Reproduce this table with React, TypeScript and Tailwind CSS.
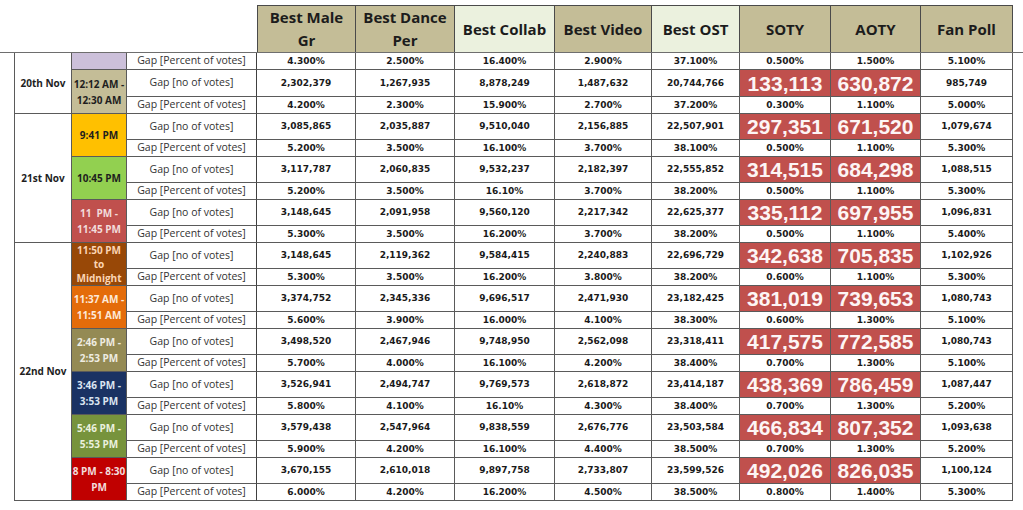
import React from 'react'

const COLS =
  'grid-cols-[58px_55px_130px_99px_99px_100px_97px_88px_91px_90px_92px]'

interface Block {
  date?: { label: string; span: string }
  time: string[]
  timeClass: string
  num: string[]
  pct: string[]
}

const headers = [
  { lines: ['Best Male', 'Gr'], bg: 'bg-[#c4bd97]' },
  { lines: ['Best Dance', 'Per'], bg: 'bg-[#c4bd97]' },
  { lines: ['Best Collab'], bg: 'bg-[#ebf1de]' },
  { lines: ['Best Video'], bg: 'bg-[#c4bd97]' },
  { lines: ['Best OST'], bg: 'bg-[#ebf1de]' },
  { lines: ['SOTY'], bg: 'bg-[#c4bd97]' },
  { lines: ['AOTY'], bg: 'bg-[#c4bd97]' },
  { lines: ['Fan Poll'], bg: 'bg-[#c4bd97]' },
]

const firstPct = ['4.300%', '2.500%', '16.400%', '2.900%', '37.100%', '0.500%', '1.500%', '5.100%']

const blocks: Block[] = [
  {
    time: ['12:12 AM -', '12:30 AM'],
    timeClass: 'justify-center leading-[16px] bg-[#c4bd97] text-[#1e1e1e]',
    num: ['2,302,379', '1,267,935', '8,878,249', '1,487,632', '20,744,766', '133,113', '630,872', '985,749'],
    pct: ['4.200%', '2.300%', '15.900%', '2.700%', '37.200%', '0.300%', '1.100%', '5.000%'],
  },
  {
    date: { label: '21st Nov', span: 'row-span-6' },
    time: ['9:41 PM'],
    timeClass: 'justify-center leading-[16px] bg-[#ffc000] text-[#1e1e1e]',
    num: ['3,085,865', '2,035,887', '9,510,040', '2,156,885', '22,507,901', '297,351', '671,520', '1,079,674'],
    pct: ['5.200%', '3.500%', '16.100%', '3.700%', '38.100%', '0.500%', '1.100%', '5.300%'],
  },
  {
    time: ['10:45 PM'],
    timeClass: 'justify-center leading-[16px] bg-[#92d050] text-[#1e1e1e]',
    num: ['3,117,787', '2,060,835', '9,532,237', '2,182,397', '22,555,852', '314,515', '684,298', '1,088,515'],
    pct: ['5.200%', '3.500%', '16.10%', '3.700%', '38.200%', '0.500%', '1.100%', '5.300%'],
  },
  {
    time: ['11  PM -', '11:45 PM'],
    timeClass: 'justify-center leading-[16px] bg-[#c0504d] text-[#f2dcdb]',
    num: ['3,148,645', '2,091,958', '9,560,120', '2,217,342', '22,625,377', '335,112', '697,955', '1,096,831'],
    pct: ['5.300%', '3.500%', '16.200%', '3.700%', '38.200%', '0.500%', '1.100%', '5.400%'],
  },
  {
    date: { label: '22nd Nov', span: 'row-span-12' },
    time: ['11:50 PM', 'to', 'Midnight'],
    timeClass: 'justify-start leading-[14px] bg-[#984807] text-[#fcd5b4]',
    num: ['3,148,645', '2,119,362', '9,584,415', '2,240,883', '22,696,729', '342,638', '705,835', '1,102,926'],
    pct: ['5.300%', '3.500%', '16.200%', '3.800%', '38.200%', '0.600%', '1.100%', '5.300%'],
  },
  {
    time: ['11:37 AM -', '11:51 AM'],
    timeClass: 'justify-center leading-[16px] bg-[#e46c0a] text-[#fde9d9]',
    num: ['3,374,752', '2,345,336', '9,696,517', '2,471,930', '23,182,425', '381,019', '739,653', '1,080,743'],
    pct: ['5.600%', '3.900%', '16.000%', '4.100%', '38.300%', '0.600%', '1.300%', '5.100%'],
  },
  {
    time: ['2:46 PM -', '2:53 PM'],
    timeClass: 'justify-center leading-[16px] bg-[#948a54] text-[#eeece1]',
    num: ['3,498,520', '2,467,946', '9,748,950', '2,562,098', '23,318,411', '417,575', '772,585', '1,080,743'],
    pct: ['5.700%', '4.000%', '16.100%', '4.200%', '38.400%', '0.700%', '1.300%', '5.100%'],
  },
  {
    time: ['3:46 PM -', '3:53 PM'],
    timeClass: 'justify-center leading-[16px] bg-[#1a3263] text-[#dbe5f1]',
    num: ['3,526,941', '2,494,747', '9,769,573', '2,618,872', '23,414,187', '438,369', '786,459', '1,087,447'],
    pct: ['5.800%', '4.100%', '16.10%', '4.300%', '38.400%', '0.700%', '1.300%', '5.200%'],
  },
  {
    time: ['5:46 PM -', '5:53 PM'],
    timeClass: 'justify-center leading-[16px] bg-[#77933c] text-[#ebf1de]',
    num: ['3,579,438', '2,547,964', '9,838,559', '2,676,776', '23,503,584', '466,834', '807,352', '1,093,638'],
    pct: ['5.900%', '4.200%', '16.100%', '4.400%', '38.500%', '0.700%', '1.300%', '5.200%'],
  },
  {
    time: ['8 PM - 8:30', 'PM'],
    timeClass: 'justify-center leading-[16px] bg-[#c00000] text-[#f2dcdb]',
    num: ['3,670,155', '2,610,018', '9,897,758', '2,733,807', '23,599,526', '492,026', '826,035', '1,100,124'],
    pct: ['6.000%', '4.200%', '16.200%', '4.500%', '38.500%', '0.800%', '1.400%', '5.300%'],
  },
]

const border = 'border-r border-b border-[#5a5a5a] overflow-hidden'
const cell = `${border} flex items-center justify-center`
const small = "font-['DejaVu_Sans',sans-serif] font-bold text-[9px] text-[#1a1a1a] leading-none"

function Label({ text }: { text: string }) {
  return (
    <div className={`${cell} border-r-[#404040] font-['Open_Sans',sans-serif] text-[10.5px] text-[#333]`}>
      {text}
    </div>
  )
}

function ValueRow({ values, big }: { values: string[]; big?: boolean }) {
  return (
    <>
      {values.map((v, i) =>
        big && (i === 5 || i === 6) ? (
          <div
            key={i}
            className={`${cell} bg-[#c0504d] font-['Liberation_Sans',Arial,sans-serif] text-[21px] font-bold leading-none text-[#fdf5f5]`}
          >
            {v}
          </div>
        ) : (
          <div key={i} className={`${cell} ${small}`}>
            {v}
          </div>
        ),
      )}
    </>
  )
}

export default function App() {
  return (
    <div className="h-[510px] w-[1023px] overflow-hidden bg-white pt-[5px]">
      <div className={`grid ${COLS} ml-[14px] h-[47px]`}>
        <div className="col-span-3" />
        {headers.map((h, i) => (
          <div
            key={h.lines[0]}
            className={`${h.bg} ${i === 0 ? 'border-l' : ''} border-t border-r border-[#4a4a4a] flex flex-col items-center justify-center whitespace-nowrap text-center font-['Open_Sans',sans-serif] text-[15px] font-bold leading-[23px] text-[#1c1c1c]`}
          >
            {h.lines.map((l) => (
              <span key={l}>{l}</span>
            ))}
          </div>
        ))}
      </div>
      <div className="border-t border-[#6e6e6e]">
        <div
          className={`grid ${COLS} grid-rows-[17px_27px_17px_repeat(9,26px_17px)] ml-[14px]`}
        >
          <div className={`${cell} row-span-3 border-l font-['Open_Sans',sans-serif] text-[10px] font-bold text-[#1e1e1e]`}>
            20th Nov
          </div>
          <div className={`${cell} bg-[#ccc0da]`} />
          <Label text="Gap [Percent of votes]" />
          <ValueRow values={firstPct} />
          {blocks.map((b, bi) => (
            <React.Fragment key={bi}>
              {b.date && (
                <div
                  className={`${cell} ${b.date.span} border-l font-['Open_Sans',sans-serif] text-[10px] font-bold text-[#1e1e1e]`}
                >
                  {b.date.label}
                </div>
              )}
              <div
                className={`${border} row-span-2 flex flex-col items-center whitespace-pre text-center font-['Open_Sans',sans-serif] text-[10px] font-bold ${b.timeClass}`}
              >
                {b.time.map((t) => (
                  <span key={t}>{t}</span>
                ))}
              </div>
              <Label text="Gap [no of votes]" />
              <ValueRow values={b.num} big />
              <Label text="Gap [Percent of votes]" />
              <ValueRow values={b.pct} />
            </React.Fragment>
          ))}
        </div>
      </div>
    </div>
  )
}
